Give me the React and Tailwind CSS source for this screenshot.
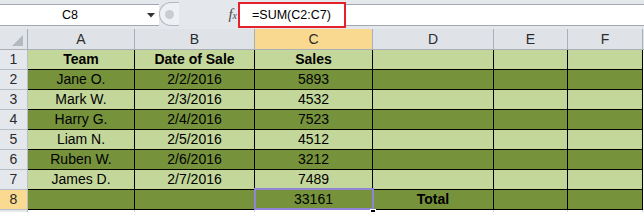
import React from "react";

const rows = [
  ["Team", "Date of Sale", "Sales", "", "", ""],
  ["Jane O.", "2/2/2016", "5893", "", "", ""],
  ["Mark W.", "2/3/2016", "4532", "", "", ""],
  ["Harry G.", "2/4/2016", "7523", "", "", ""],
  ["Liam N.", "2/5/2016", "4512", "", "", ""],
  ["Ruben W.", "2/6/2016", "3212", "", "", ""],
  ["James D.", "2/7/2016", "7489", "", "", ""],
  ["", "", "33161", "Total", "", ""],
];

const cols = ["A", "B", "C", "D", "E", "F"];

export default function App() {
  return (
    <div className="w-[644px] h-[212px] bg-white overflow-hidden relative font-['Liberation_Sans',Arial,sans-serif] text-black">
      {/* Formula bar */}
      <div className="h-[29px] bg-[#e4e7ec] flex relative">
        <div className="w-[159px] mt-[4px] h-[22px] bg-white border-y border-[#a3a8b0] flex items-center">
          <div className="w-[140px] text-center text-[12.5px] leading-none">C8</div>
          <svg width="8" height="5" viewBox="0 0 8 5" className="ml-[7px]">
            <path d="M0 0 L8 0 L4 4.5 Z" fill="#333" />
          </svg>
        </div>
        <div className="w-[20px] mt-[2px] h-[24px] rounded-l-full border border-r-0 border-[#b3b8bf] bg-[#eef0f3] flex items-center pl-[5px]">
          <div className="w-[9px] h-[9px] rounded-full bg-[#c9ccd1]" />
        </div>
        <div className="w-[59px] flex items-center justify-end pr-[1px]">
          <span className="font-['Liberation_Serif',serif] italic text-[15px] leading-none text-[#4a4a4a]">
            f<span className="text-[10px]">x</span>
          </span>
        </div>
        <div className="flex-1 mt-[4px] h-[22px] bg-white border-y border-[#a3a8b0]" />
        <div className="absolute left-[238px] top-[2px] w-[108px] h-[26px] border-[2.5px] border-[#e5222c] bg-white flex items-center pl-[12px]">
          <span className="text-[12.5px] leading-none">=SUM(C2:C7)</span>
        </div>
      </div>

      {/* Grid */}
      <div className="grid grid-cols-[28px_107px_120px_118px_121px_74px_75px_1fr]">
        {/* header row */}
        <div className="h-[21px] bg-[#e1e5ea] border-r border-b border-[#a9afb7] relative">
          <svg width="11" height="11" viewBox="0 0 11 11" className="absolute right-[4px] bottom-[3px]">
            <path d="M11 0 L11 11 L0 11 Z" fill="#b4b9c0" />
          </svg>
        </div>
        {cols.map((c) => (
          <div
            key={c}
            className={
              "h-[21px] border-r border-b border-[#a9afb7] flex items-center justify-center text-[14px] text-[#2b2b2b] " +
              (c === "C" ? "bg-[#f9d98f]" : "bg-[#dfe3e8]")
            }
          >
            {c}
          </div>
        ))}
        <div className="h-[21px] bg-[#dfe3e8] border-b border-[#a9afb7]" />

        {rows.map((r, i) => {
          const dark = i % 2 === 1;
          const bg = dark ? "bg-[#76933c]" : "bg-[#c4d79b]";
          return (
            <React.Fragment key={i}>
              <div
                className={
                  "h-[20px] border-r border-b border-[#b7bdc5] flex items-center justify-center text-[14px] text-[#2b2b2b] " +
                  (i === 7 ? "bg-[#f9da90]" : "bg-[#e4e7ec]")
                }
              >
                {i + 1}
              </div>
              {r.map((v, j) => (
                <div
                  key={j}
                  className={
                    "h-[20px] border-r border-b border-black flex items-center justify-center text-[14px] relative " +
                    bg +
                    (i === 0 || (i === 7 && j === 3) ? " font-bold" : "")
                  }
                >
                  {v}
                  {i === 7 && j === 2 && (
                    <>
                      <div className="absolute left-[-1px] right-[-2px] top-[-2px] bottom-[-1px] border-2 border-[#8f84d6] z-10" />
                      <div className="absolute right-[-4px] bottom-[-5px] w-[6px] h-[5px] bg-black border border-white z-20" />
                    </>
                  )}
                </div>
              ))}
              <div className="h-[20px] bg-white" />
            </React.Fragment>
          );
        })}

        {/* partial row 9 */}
        <div className="h-[20px] bg-[#e4e7ec] border-r border-[#b7bdc5]" />
        {cols.map((c) => (
          <div key={c} className="h-[20px] bg-white border-r border-[#d0d7e5]" />
        ))}
        <div className="h-[20px] bg-white" />
      </div>
    </div>
  );
}
